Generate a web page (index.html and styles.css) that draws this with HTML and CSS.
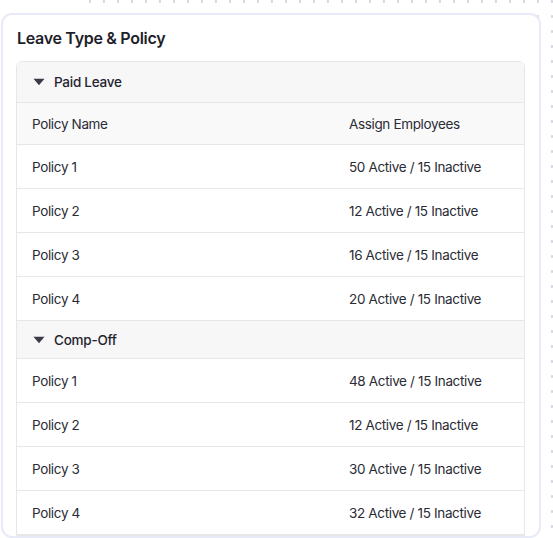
FILE: index.html
```html
<!DOCTYPE html>
<html>
<head>
<meta charset="utf-8">
<link rel="stylesheet" href="styles.css">
</head>
<body>
<div class="dots"></div>
<section class="card">
  <h2 class="title">Leave Type &amp; Policy</h2>
  <div class="table">
    <div class="group">
      <svg class="caret" width="12" height="8" viewBox="0 0 12 8"><path d="M0.5 0.8h11L6 7.2z" fill="#3a3b46"/></svg>
      <span>Paid Leave</span>
    </div>
    <div class="row head"><span class="c1">Policy Name</span><span class="c2">Assign Employees</span></div>
    <div class="row"><span class="c1">Policy 1</span><span class="c2">50 Active / 15 Inactive</span></div>
    <div class="row"><span class="c1">Policy 2</span><span class="c2">12 Active / 15 Inactive</span></div>
    <div class="row"><span class="c1">Policy 3</span><span class="c2">16 Active / 15 Inactive</span></div>
    <div class="row"><span class="c1">Policy 4</span><span class="c2">20 Active / 15 Inactive</span></div>
    <div class="group short">
      <svg class="caret" width="12" height="8" viewBox="0 0 12 8"><path d="M0.5 0.8h11L6 7.2z" fill="#3a3b46"/></svg>
      <span>Comp-Off</span>
    </div>
    <div class="row"><span class="c1">Policy 1</span><span class="c2">48 Active / 15 Inactive</span></div>
    <div class="row"><span class="c1">Policy 2</span><span class="c2">12 Active / 15 Inactive</span></div>
    <div class="row"><span class="c1">Policy 3</span><span class="c2">30 Active / 15 Inactive</span></div>
    <div class="row"><span class="c1">Policy 4</span><span class="c2">32 Active / 15 Inactive</span></div>
  </div>
</section>
</body>
</html>
```
FILE: styles.css
```css
html {
  background: #ffffff;
}
body {
  margin: 0;
  padding: 0;
  font-family: Inter, "Noto Sans", sans-serif;
  color: #24252f;
  overflow: hidden;
}
.dots {
  position: fixed;
  top: 0;
  left: 82px;
  right: 0;
  bottom: 0;
  z-index: -1;
  background-image: radial-gradient(circle, #d4d5da 1px, transparent 1.5px);
  background-size: 14px 15px;
  background-position: 1px -6px;
}
.card {
  box-sizing: border-box;
  width: 540px;
  height: 525px;
  margin: 13px 0 0 1px;
  padding: 0 14px 0 13px;
  border: 2px solid #e8eaf8;
  border-radius: 11px;
  background: #ffffff;
  overflow: hidden;
}
.title {
  margin: 0;
  padding: 13px 0 13px 1px;
  font-size: 16px;
  line-height: 20px;
  font-weight: 600;
  color: #1d1e2a;
  letter-spacing: -0.3px;
}
.table {
  border: 1px solid #e7e7ea;
  border-radius: 6px 6px 0 0;
  overflow: hidden;
}
.group {
  display: flex;
  align-items: center;
  gap: 9px;
  height: 40px;
  padding-left: 16px;
  background: #f7f7f8;
  font-size: 13.5px;
  font-weight: 500;
  letter-spacing: -0.25px;
  color: #24252f;
  border-bottom: 1px solid #e7e7ea;
}
.group.short {
  height: 37px;
}
.caret {
  display: block;
}
.row {
  display: grid;
  grid-template-columns: 317px 1fr;
  align-items: center;
  height: 43px;
  padding-left: 15px;
  font-size: 13.5px;
  letter-spacing: -0.35px;
  color: #2a2b35;
  border-bottom: 1px solid #e7e7ea;
}
.row.head {
  height: 41px;
  background: #f9f9fa;
}
```
